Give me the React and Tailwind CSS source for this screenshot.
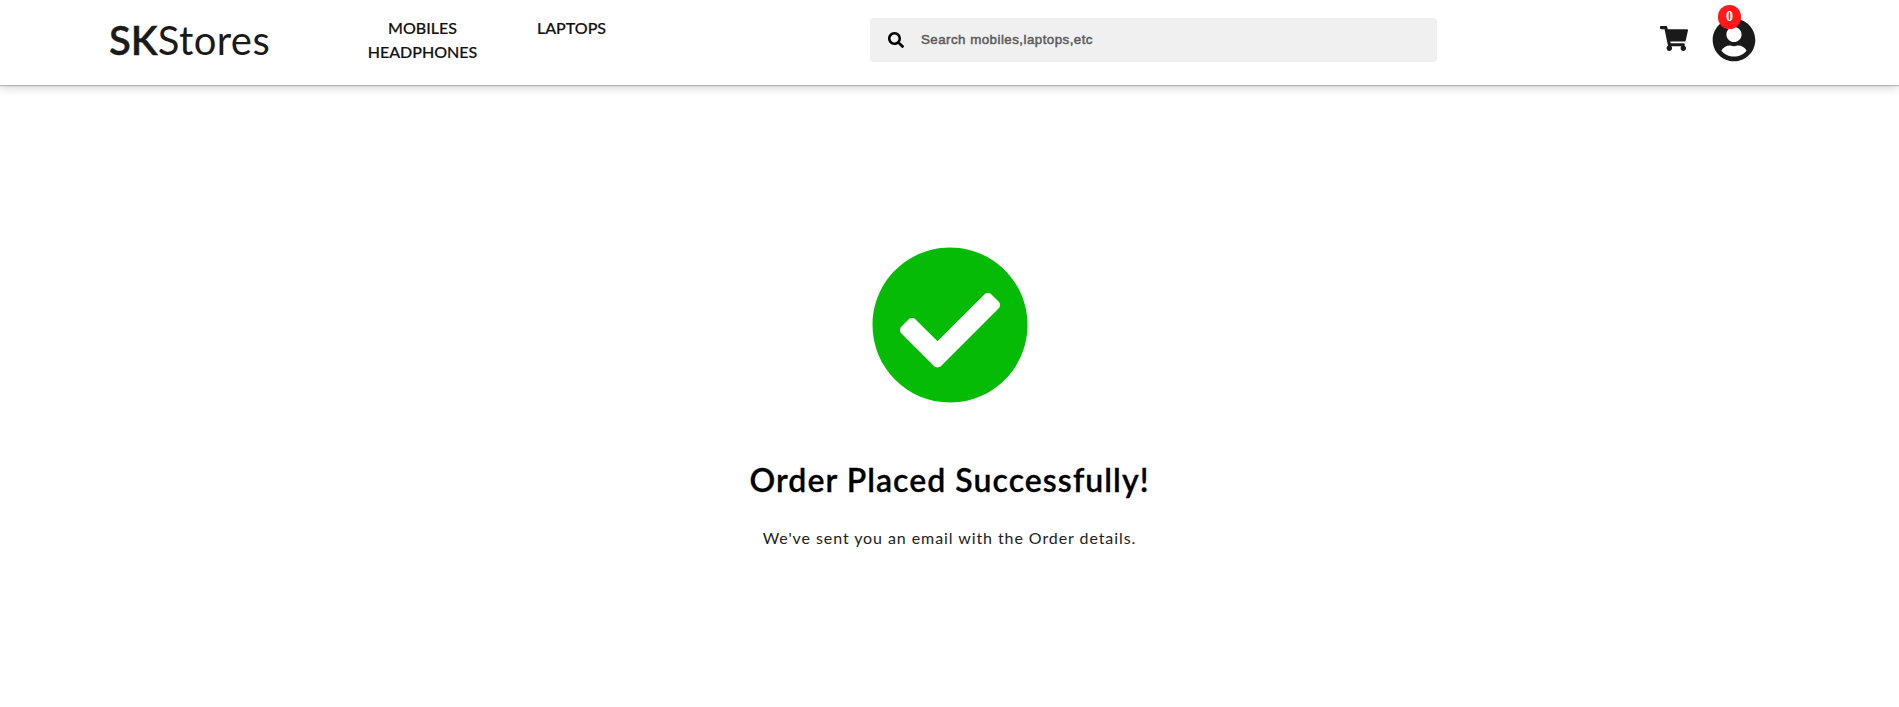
import { FaSearch, FaShoppingCart, FaUserCircle, FaCheckCircle } from "react-icons/fa";

export default function App() {
  return (
    <div className="h-[707px] overflow-hidden bg-white font-['Lato',sans-serif] text-[#1a1a1a]">
      <header className="flex h-[85px] items-start shadow-[0_1px_1px_rgba(0,15,8,0.22),0_2px_10px_rgba(0,15,8,0.2)]">
        <div className="ml-[109px] mt-[15px] w-[200px] text-[40px] leading-[50px] tracking-[0.4px]">
          <span className="font-semibold tracking-normal [-webkit-text-stroke:0.4px_#1a1a1a]">SK</span>Stores
        </div>
        <nav className="ml-[39px] mt-[16px] grid w-[298px] grid-cols-2 text-center text-base leading-6 font-medium text-[#111] [-webkit-text-stroke:0.2px_#111]">
          <a>MOBILES</a>
          <a>LAPTOPS</a>
          <a>HEADPHONES</a>
        </nav>
        <div className="ml-[224px] mt-[18px] flex h-[44px] w-[567px] items-center rounded bg-[#f0f0f0] pl-[18px]">
          <FaSearch className="size-4 text-black" />
          <span className="ml-[17px] font-['Liberation_Sans',sans-serif] text-[13.33px] tracking-[0.46px] text-[#5c5c5c] [-webkit-text-stroke:0.5px_#5c5c5c]">
            Search mobiles,laptops,etc
          </span>
        </div>
        <FaShoppingCart className="ml-[223px] mt-[26px] h-[25px] w-[28px]" />
        <div className="relative ml-[24px] mt-[18px]">
          <FaUserCircle className="size-[44px]" />
          <span className="absolute -top-[13px] left-[6px] flex h-[24px] w-[23px] items-center justify-center rounded-full bg-[#ff1a1a] font-['Liberation_Serif',serif] text-sm font-bold text-white">
            0
          </span>
        </div>
      </header>
      <main className="flex flex-col items-center pt-[160px] text-black">
        <FaCheckCircle className="size-[160px] text-[#06bb06]" />
        <h1 className="mt-[51px] text-[32px] leading-[48px] font-semibold tracking-[1.05px] [-webkit-text-stroke:0.3px_black]">
          Order Placed Successfully!
        </h1>
        <p className="mt-[22px] text-base leading-6 tracking-[0.92px] text-[#222]">We've sent you an email with the Order details.</p>
      </main>
    </div>
  );
}
